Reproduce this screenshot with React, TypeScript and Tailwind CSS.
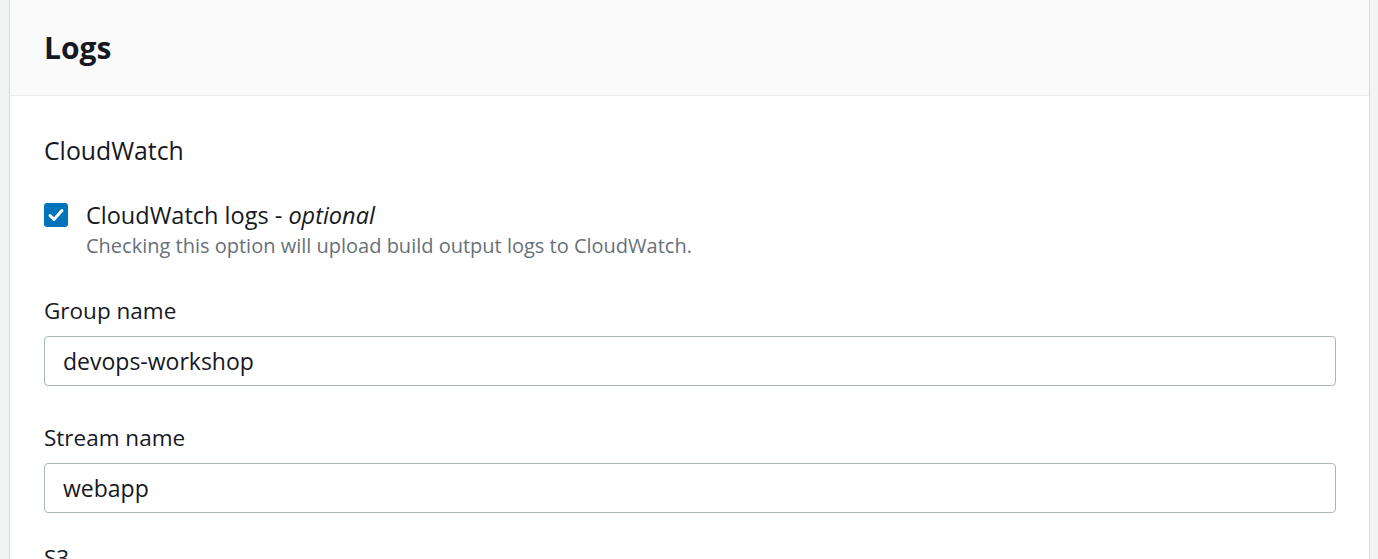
import React from "react";

const font = { fontFamily: '"Open Sans", "Noto Sans", Arial, sans-serif' };

function Field({ label, value }: { label: string; value: string }) {
  return (
    <div className="flex flex-col">
      <div className="h-[30px] leading-[30px] text-[22.5px] text-[#16191f]">{label}</div>
      <div className="mt-[10px] h-[50px] rounded-[4px] border border-[#aab7b8] bg-white flex items-center pl-[18px] text-[23px] text-[#16191f]">
        {value}
      </div>
    </div>
  );
}

export default function App() {
  return (
    <div style={font} className="w-[1378px] h-[559px] overflow-hidden bg-[#f2f3f3] flex">
      <div className="w-[9px] shrink-0" />
      <div className="flex-1 border-l border-r border-[#d5dbdb] bg-white flex flex-col">
        <div className="h-[96px] shrink-0 bg-[#fafafa] border-b border-[#eaeded] flex items-center pl-[34px]">
          <h2 className="text-[30px] font-bold text-[#16191f] leading-none">Logs</h2>
        </div>
        <div className="pl-[34px] pr-[33px] flex flex-col">
          <div className="mt-[39px] h-[30px] leading-[30px] text-[24.8px] text-[#16191f]">CloudWatch</div>
          <div className="mt-[35px] flex">
            <div className="w-[24px] h-[24px] mt-[3px] rounded-[3px] bg-[#0073bb] flex items-center justify-center shrink-0">
              <svg width="20" height="20" viewBox="0 0 20 20" fill="none">
                <path d="M4 10.5l4 4L16 5.5" stroke="white" strokeWidth="3" strokeLinecap="round" strokeLinejoin="round" />
              </svg>
            </div>
            <div className="ml-[18px] flex flex-col">
              <div className="h-[30px] leading-[30px] text-[23.5px] text-[#16191f]">
                CloudWatch logs - <i>optional</i>
              </div>
              <div className="h-[24px] leading-[24px] mt-[4px] text-[20px] text-[#687078]">
                Checking this option will upload build output logs to CloudWatch.
              </div>
            </div>
          </div>
          <div className="mt-[38px]">
            <Field label="Group name" value="devops-workshop" />
          </div>
          <div className="mt-[37px]">
            <Field label="Stream name" value="webapp" />
          </div>
          <div className="mt-[30px] h-[30px] leading-[30px] text-[22.5px] text-[#16191f]">S3</div>
        </div>
      </div>
      <div className="w-[8px] shrink-0" />
    </div>
  );
}
